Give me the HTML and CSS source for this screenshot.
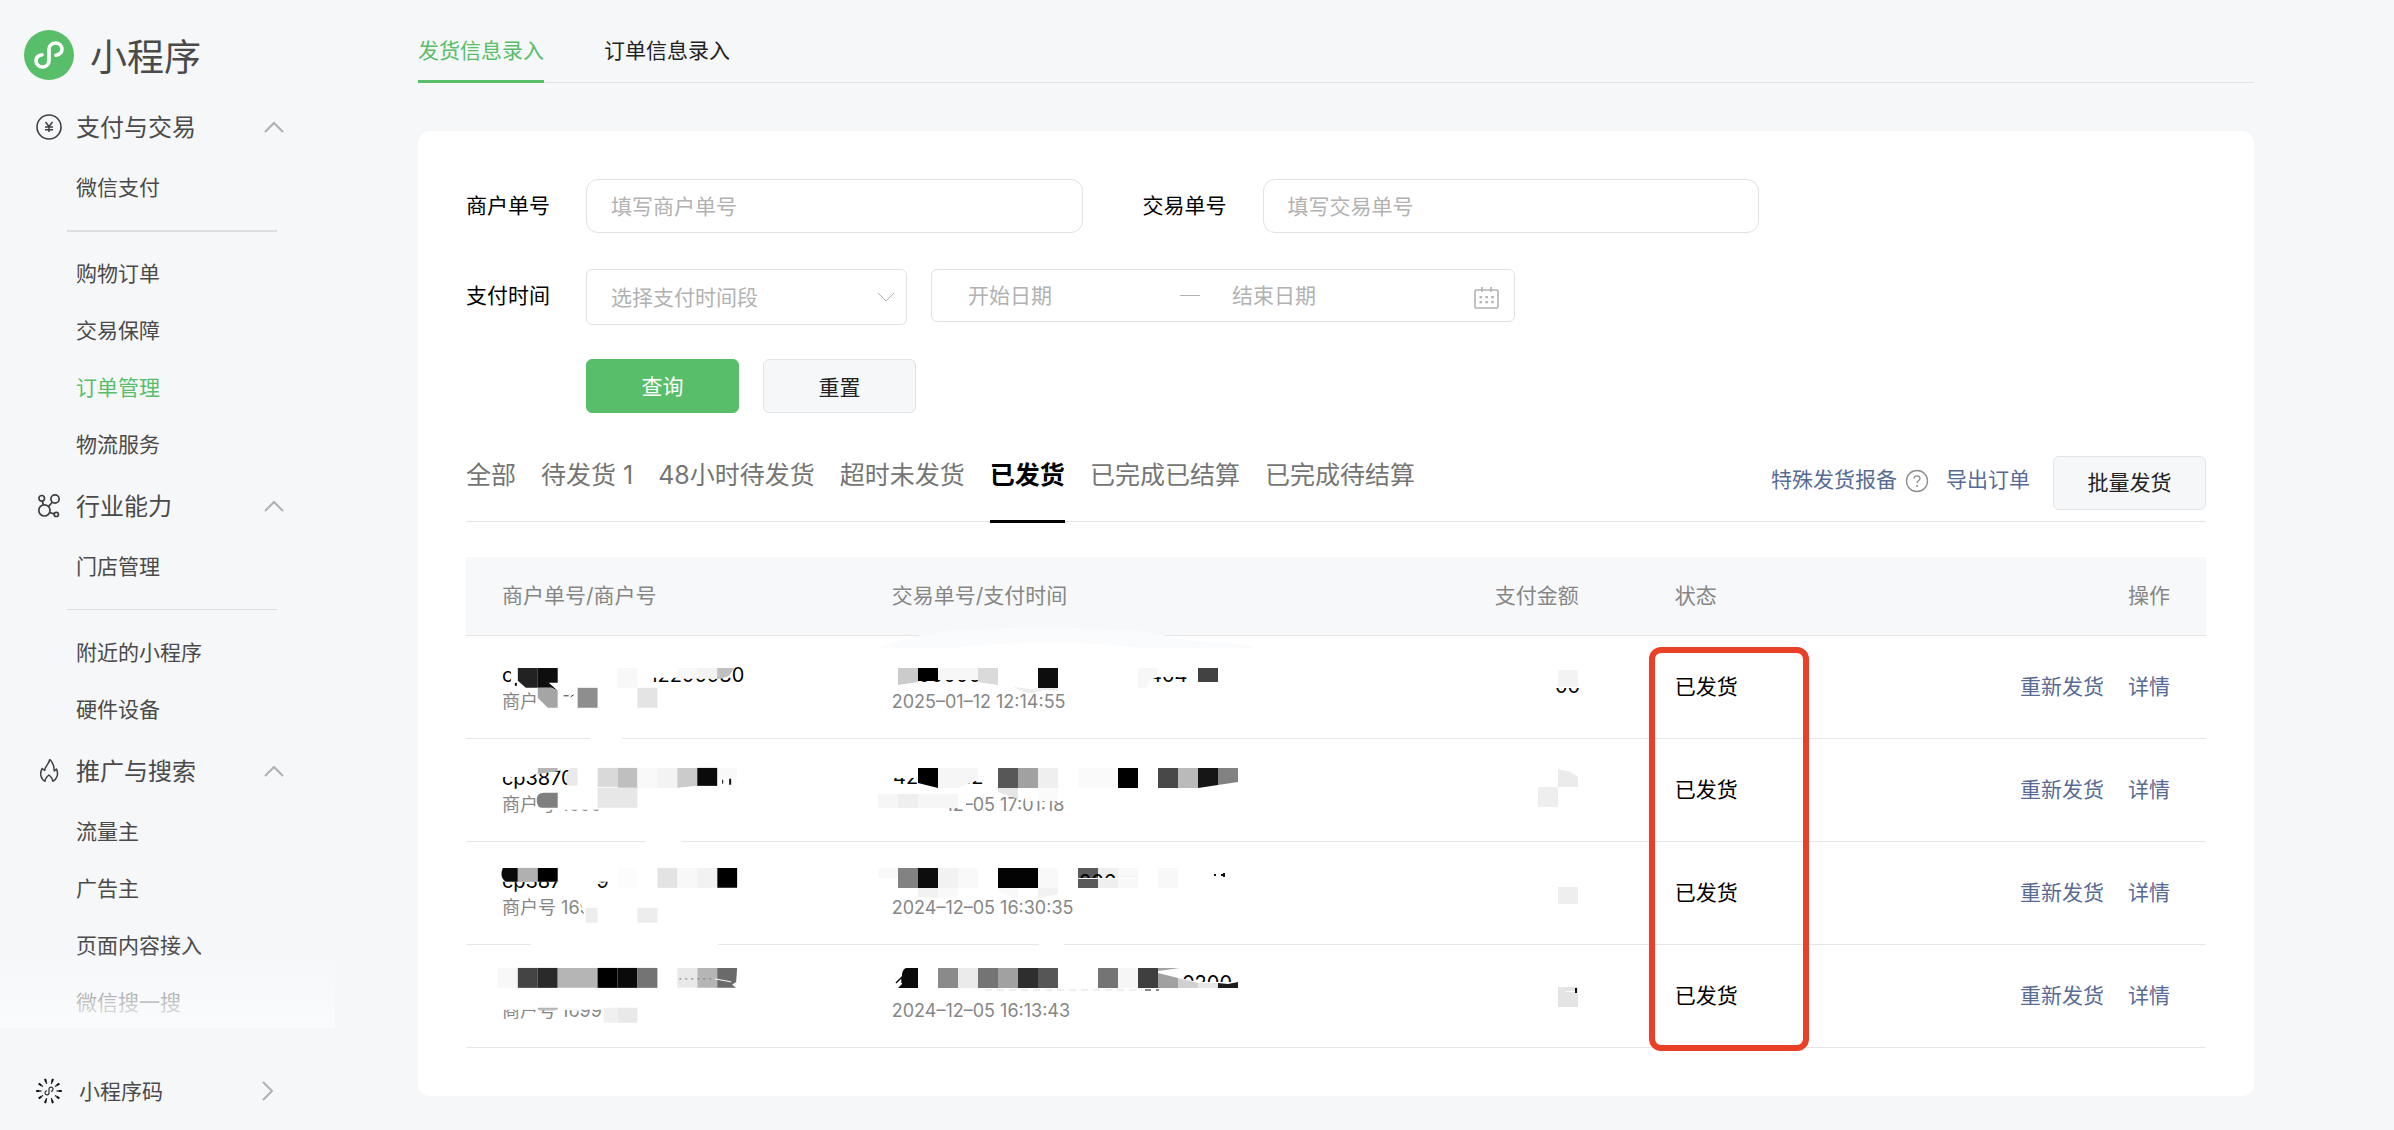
FILE: index.html
```html
<!DOCTYPE html>
<html lang="zh-CN">
<head>
<meta charset="utf-8">
<meta name="viewport" content="width=device-width, initial-scale=1">
<title>小程序</title>
<link rel="stylesheet" href="styles.css">
</head>
<body>
<div class="layout">
  <aside class="sidebar">
    <header class="brand">
      <svg class="brand-logo" viewBox="0 0 50 50" aria-hidden="true"><circle cx="25" cy="25" r="25" fill="#58be6a"/><path d="M32 25.2C35.6 24.6 38 22.4 38 19C38 15.6 35 13 31.500 13C28 13 25 15.600 25 19V31C25 34.400 22 37 18.500 37C15 37 12 34.400 12 31C12 27.600 14.400 25.400 18 24.800" fill="none" stroke="#fff" stroke-width="3.600" stroke-linecap="round"/></svg>
      <span class="brand-name">小程序</span>
    </header>
    <nav class="menu">
      <section>
        <button class="group" type="button">
          <svg class="icon" viewBox="0 0 26 26"><g fill="none" stroke="#3f3f3f" stroke-width="1.600"><circle cx="13" cy="13" r="12"/><path d="M9.500 8L13 12.500L16.500 8M13 12.500V18M9 13H17M9 15.800H17" stroke-width="1.500"/></g></svg>
          <span class="group-name">支付与交易</span>
          <svg class="chevron" viewBox="0 0 20 12"><path d="M1 11L10 2L19 11"/></svg>
        </button>
        <a class="item" href="#">微信支付</a>
        <hr class="rule rule-strong">
        <a class="item" href="#">购物订单</a>
        <a class="item" href="#">交易保障</a>
        <a class="item item-active" href="#">订单管理</a>
        <a class="item" href="#">物流服务</a>
      </section>
      <section>
        <button class="group" type="button">
          <svg class="icon" viewBox="0 0 26 26"><g fill="none" stroke="#3f3f3f" stroke-width="1.700"><circle cx="5.700" cy="5.300" r="2.800"/><circle cx="19" cy="6" r="4.100"/><circle cx="8.400" cy="17.400" r="5.600"/><circle cx="20.300" cy="21.400" r="2.100"/><path d="M6.400 8.200L7.300 11.800M16.400 9.200L12.600 13.400M13.700 19.500L18.200 20.900"/></g></svg>
          <span class="group-name">行业能力</span>
          <svg class="chevron" viewBox="0 0 20 12"><path d="M1 11L10 2L19 11"/></svg>
        </button>
        <a class="item" href="#">门店管理</a>
        <hr class="rule">
        <a class="item" href="#">附近的小程序</a>
        <a class="item" href="#">硬件设备</a>
      </section>
      <section>
        <button class="group" type="button">
          <svg class="icon" viewBox="0 0 26 26"><path d="M13.800 1.500C13 6 9 8 8.600 12.500L6.200 10.500C3.500 15 4.500 21 9 23.300C9 20.600 11 18.600 12.900 17C14.700 18.600 16.800 20.600 16.800 23.300C21 21.300 22.800 16 20.500 11L18.300 13C18.300 8 16.500 4 13.800 1.500Z" fill="none" stroke="#3f3f3f" stroke-width="1.500" stroke-linejoin="round"/></svg>
          <span class="group-name">推广与搜索</span>
          <svg class="chevron" viewBox="0 0 20 12"><path d="M1 11L10 2L19 11"/></svg>
        </button>
        <a class="item" href="#">流量主</a>
        <a class="item" href="#">广告主</a>
        <a class="item" href="#">页面内容接入</a>
        <a class="item" href="#">微信搜一搜</a>
      </section>
    </nav>
    <a class="code-link" href="#">
      <svg class="icon" viewBox="-13 -13 26 26"><defs><path id="ray" d="M7.500 0H9.500" stroke="#111" stroke-width="1.200"/><path id="tip" d="M9.500 0H12.800" stroke="#111" stroke-width="2"/></defs>
        <g id="rays"><use href="#ray"/><use href="#tip"/></g><use href="#rays" transform="rotate(36)"/><use href="#rays" transform="rotate(72)"/><use href="#rays" transform="rotate(108)"/><use href="#rays" transform="rotate(144)"/><use href="#rays" transform="rotate(180)"/><use href="#rays" transform="rotate(216)"/><use href="#rays" transform="rotate(252)"/><use href="#rays" transform="rotate(288)"/><use href="#rays" transform="rotate(324)"/>
        <path d="M2 .4C3.300 .2 4 -.6 4 -1.800C4 -3 3 -3.800 2 -3.800C.8 -3.800 0 -3 0 -1.800V1.800C0 3 -.8 3.800 -2 3.800C-3 3.800 -4 3 -4 1.800C-4 .6 -3.300 -.2 -2 -.4" fill="none" stroke="#333" stroke-width="1.200"/></svg>
      <span class="code-name">小程序码</span>
      <svg class="chevron-right" viewBox="0 0 12 20"><path d="M1 1L10 10L1 19"/></svg>
    </a>
  </aside>

  <main class="main">
    <nav class="page-tabs">
      <a class="page-tab page-tab-active" href="#">发货信息录入</a>
      <a class="page-tab" href="#">订单信息录入</a>
    </nav>

    <section class="card">
      <form class="filters">
        <div class="filter-row filter-row-wide">
          <div class="field">
            <label for="merchant-no">商户单号</label>
            <input class="box box-round" id="merchant-no" type="text" placeholder="填写商户单号">
          </div>
          <div class="field">
            <label for="trade-no">交易单号</label>
            <input class="box box-round" id="trade-no" type="text" placeholder="填写交易单号">
          </div>
        </div>
        <div class="filter-row">
          <label for="period">支付时间</label>
          <div class="select-wrap">
            <select class="box" id="period"><option>选择支付时间段</option></select>
            <svg class="select-arrow" viewBox="0 0 18 11"><path d="M1 1L9 9L17 1"/></svg>
          </div>
          <div class="range">
            <input class="date date-start" type="text" placeholder="开始日期" aria-label="开始日期">
            <span class="dash"></span>
            <input class="date date-end" type="text" placeholder="结束日期" aria-label="结束日期">
            <svg class="calendar" viewBox="0 0 26 22"><g fill="none" stroke="#b2b2b2" stroke-width="1.600"><rect x="1" y="3" width="23" height="18" rx="1"/><path d="M8 0V5M17 0V5"/></g><path d="M5.500 9H8V11.200H5.500ZM11.400 9H13.900V11.200H11.400ZM17.300 9H19.800V11.200H17.300ZM5.500 14H8V16.200H5.500ZM11.400 14H13.900V16.200H11.400ZM17.300 14H19.800V16.200H17.300Z" fill="#b2b2b2"/></svg>
          </div>
        </div>
        <div class="actions">
          <button class="btn btn-primary" type="button">查询</button>
          <button class="btn" type="button">重置</button>
        </div>
      </form>

      <div class="toolbar">
        <nav class="status-tabs">
          <a class="status-tab" href="#">全部</a>
          <a class="status-tab" href="#">待发货 1</a>
          <a class="status-tab" href="#">48小时待发货</a>
          <a class="status-tab" href="#">超时未发货</a>
          <a class="status-tab status-tab-active" href="#">已发货</a>
          <a class="status-tab" href="#">已完成已结算</a>
          <a class="status-tab" href="#">已完成待结算</a>
        </nav>
        <div class="tools">
          <a class="link tool-link" href="#">特殊发货报备</a>
          <svg class="help" viewBox="0 0 24 24"><g fill="none" stroke="#8c8c8c" stroke-width="1.300"><circle cx="12" cy="12" r="10.500"/><path d="M9 9.800C9 7.800 10.300 6.800 12 6.800C13.700 6.800 15 7.900 15 9.500C15 11.500 12 11.700 12 14.300"/></g><circle cx="12" cy="16.900" r="1" fill="#8c8c8c"/></svg>
          <a class="link tool-link" href="#">导出订单</a>
          <button class="btn" type="button">批量发货</button>
        </div>
      </div>

      <div class="table-wrap">
        <table class="orders">
          <colgroup><col class="col-merchant"><col class="col-trade"><col class="col-status"><col></colgroup>
          <thead>
            <tr><th>商户单号/商户号</th><th><div class="split"><span>交易单号/支付时间</span><span>支付金额</span></div></th><th>状态</th><th class="right">操作</th></tr>
          </thead>
          <tbody>
            <tr>
              <td>
                <span class="meta">商户号 1699</span>
                <svg class="mosaic" viewBox="6 6 391 102" preserveAspectRatio="xMinYMin">
                  <text x="42" y="52">cp</text><text x="190" y="52">12200980</text>
                  <path fill="#fff" d="M51 34H104V54H51ZM52 54H66V62H52ZM177 34H272V48H177ZM79 56H240V82H79ZM130 101H163V110H130Z"/>
                  <path fill="#000" d="M55 53H57V56H55Z"/>
                  <path fill="#222" d="M58 38H78V58H66L58 51Z"/><path fill="#0e0e0e" d="M78 38H98V53H89L98 61L92 58H78Z"/>
                  <path fill="#a5a5a5" d="M78 58H92L98 61V78H88L78 68Z"/><path fill="#8e8e8e" d="M118 58H138V78H118Z"/>
                  <path fill="#f8f8f8" d="M158 38H178V58H158ZM218 38H238V49H218Z"/><path fill="#f3f3f3" d="M238 38H258V49H238Z"/><path fill="#c0c0c0" d="M258 38H275L270 46L262 49H258Z"/>
                  <path fill="#e4e4e4" d="M178 58H198V78H178Z"/><path stroke="#333" d="M104 66H109M111 67L114 65"/>
                </svg>
              </td>
              <td>
                <div class="split"><span class="meta">2025–01–12 12:14:55</span>
                <svg class="amount" viewBox="59 17 60 102"><text x="95" y="74">00</text><path fill="#fff" d="M90 50H120V69H90Z"/><path fill="#f3f3f3" d="M98 51H118V68H98Z"/></svg></div>
                <svg class="mosaic" viewBox="-4 16 782 102" preserveAspectRatio="xMinYMin">
                  <path fill="#fafbfc" d="M18 28Q60 12 100 10Q200 4 290 12Q330 23 370 23Q386 24 394 28H278Q240 22 170 23Q120 24 94 28Z"/>
                  <text x="58" y="62">00000</text><text x="289" y="62">404</text>
                  <path fill="#fff" d="M36 44H176V60H36ZM280 44H336V57H280Z"/>
                  <path fill="#cbcbcb" d="M38 48H58V62L38 65Z"/><path fill="#000" d="M58 48H78V61H58Z"/><path fill="#f7f7f7" d="M78 48H118V60H78ZM278 48H298V57L290 60L286 68H278Z"/><path fill="#dadada" d="M118 48H138V65L118 62Z"/>
                  <path fill="#0d0d0d" d="M178 48H198V68H178Z"/><path fill="#ededed" d="M178 68H198V71L184 70L174 73H168L153 67L170 69Z"/><path fill="#424242" d="M338 48H358V62H338Z"/>
                </svg>
              </td>
              <td class="plain">已发货</td>
              <td class="plain right"><a class="link" href="#">重新发货</a><a class="link link-next" href="#">详情</a></td>
            </tr>
            <tr>
              <td>
                <span class="meta">商户号 1699</span>
                <svg class="mosaic" viewBox="6 109 391 102" preserveAspectRatio="xMinYMin">
                  <text x="42" y="155">cp3870</text>
                  <path fill="#fff" d="M38 134H112L104 140L78 144L62 147H38ZM76 160H200V180H76ZM186 206H222V213H186Z"/>
                  <path fill="#b5b5b5" d="M78 138H98V141L78 144Z"/><path fill="#eaeaea" d="M110 138H118V156H108Q104 148 110 138Z"/>
                  <path fill="#d9d9d9" d="M138 138H158V157H138Z"/><path fill="#bfbfbf" d="M158 138H178V158H158Z"/><path fill="#f9f9f9" d="M178 138H198V158H178ZM258 138H278V149H258Z"/><path fill="#f3f3f3" d="M198 138H218V158H198Z"/><path fill="#cbcbcb" d="M218 138H238V156L218 158Z"/><path fill="#0b0b0b" d="M238 138H258V156H238Z"/>
                  <path fill="#e7e7e7" d="M138 158H178V178H138Z"/><path fill="#7f7f7f" d="M84 163H98V178H82Q77 178 77 170Q77 163 84 163Z"/><path fill="#111" d="M270 149H272V155H270ZM263 150H264V154H263Z"/>
                </svg>
              </td>
              <td>
                <div class="split"><span class="meta">2024–12–05 17:01:18</span>
                <svg class="amount" viewBox="59 120 60 102"><path fill="#ebebeb" d="M98 150L110 153L118 158V168H98Z"/><path fill="#eee" d="M78 168H98V188H78Z"/></svg></div>
                <svg class="mosaic" viewBox="-4 119 782 102" preserveAspectRatio="xMinYMin">
                  <text x="33" y="164">42</text><text x="103" y="164">12</text><text x="360" y="164">7</text>
                  <path fill="#fff" d="M30 146H57V158H30ZM98 146H136V161H98ZM20 174H106V188H88V194H20ZM165 172H208V181L165 181Z"/>
                  <path fill="#000" d="M58 148H78V168L58 163ZM258 148H278V168H258Z"/><path fill="#f6f6f6" d="M78 148H118V160L98 168H78ZM18 174H38V188H18ZM58 174H98V188H58Z"/><path fill="#efefef" d="M38 174H58V188H38ZM178 148H198V168H178Z"/>
                  <path fill="#575757" d="M138 148H158V168H138Z"/><path fill="#a1a1a1" d="M158 148H178V168H158Z"/><path fill="#e6e6e6" d="M138 168H158V179L138 172Z"/><path fill="#fafafa" d="M218 148H258V168H218ZM178 168H198V181H178Z"/>
                  <path fill="#484848" d="M298 148H318V168H298Z"/><path fill="#bababa" d="M318 148H338V168H318Z"/><path fill="#161616" d="M338 148H358V165L338 168Z"/><path fill="#828282" d="M358 148H378V162L358 165Z"/>
                </svg>
              </td>
              <td class="plain">已发货</td>
              <td class="plain right"><a class="link" href="#">重新发货</a><a class="link link-next" href="#">详情</a></td>
            </tr>
            <tr>
              <td>
                <span class="meta">商户号 1699</span>
                <svg class="mosaic" viewBox="6 212 391 102" preserveAspectRatio="xMinYMin">
                  <text x="42" y="258">cp387</text><text x="137" y="258">9</text>
                  <path fill="#fff" d="M38 238H160V252H38ZM99 252H104V260H99ZM119 268H200V294H128ZM71 309H259V316H71Z"/>
                  <path fill="#0a0a0a" d="M43 238H58V252H46Q39 247 43 238Z"/><path fill="#b0b0b0" d="M58 238H78V252H58Z"/><path fill="#000" d="M78 238H98V252H78ZM258 238H278V258H258Z"/>
                  <path fill="#fcfcfc" d="M158 238H178V258H158Z"/><path fill="#e3e3e3" d="M198 238H218V258H198Z"/><path fill="#f8f8f8" d="M218 238H238V258H218Z"/><path fill="#f2f2f2" d="M238 238H258V258H238Z"/><path fill="#ededed" d="M126 278H138V293H126ZM178 278H198V293H178Z"/>
                </svg>
              </td>
              <td>
                <div class="split"><span class="meta">2024–12–05 16:30:35</span>
                <svg class="amount" viewBox="59 223 60 102"><path fill="#eee" d="M98 268H118V285H98Z"/></svg></div>
                <svg class="mosaic" viewBox="-4 222 782 102" preserveAspectRatio="xMinYMin">
                  <path fill="#828282" d="M38 248H58V268H38Z"/><path fill="#0d0d0d" d="M58 248H78V268H58Z"/><path fill="#f2f2f2" d="M78 248H98V268H78ZM58 268H78V278L58 277ZM178 268H198V274L178 278Z"/><path fill="#f9f9f9" d="M98 248H118V268H98ZM18 248H38V258H18ZM78 268H98V276L78 278ZM178 248H198V268H178ZM138 268H158V278L138 272Z"/>
                  <path fill="#030303" d="M138 248H178V268H138Z"/><path fill="#5a5a5a" d="M218 248H238V268H218Z"/><path fill="#efefef" d="M238 248H258V268H238Z"/><path fill="#f8f8f8" d="M258 248H278V268H258ZM298 248H318V268H298Z"/>
                  <text x="219" y="269">206w</text><path fill="#fff" d="M218 258H280V259H218Z"/><path fill="#5a5a5a" d="M218 259H238V268H218Z"/><path fill="#efefef" d="M238 259H258V268H238Z"/><path fill="#f8f8f8" d="M258 259H278V268H258Z"/><path fill="#fff" d="M218 268H282V274H218ZM278 250H290V269H278Z"/>
                  <path fill="#111" d="M363 253H365V257H363ZM354 254H356V256H354ZM361 254H363V256H361Z"/>
                </svg>
              </td>
              <td class="plain">已发货</td>
              <td class="plain right"><a class="link" href="#">重新发货</a><a class="link link-next" href="#">详情</a></td>
            </tr>
            <tr>
              <td>
                <span class="meta">商户号 16990</span>
                <svg class="mosaic" viewBox="6 315 391 102" preserveAspectRatio="xMinYMin">
                  <path fill="#fff" d="M38 366H200V380H38ZM143 378H200V394H143Z"/>
                  <path fill="#f8f8f8" d="M38 338H58V358H38ZM98 378H118V382Z"/><path fill="#444" d="M58 338H78V358H58Z"/><path fill="#2a2a2a" d="M78 338H98V358H78Z"/><path fill="#b5b5b5" d="M98 338H138V358H98ZM238 338H258V358H238ZM78 378H98V380H78Z"/>
                  <path fill="#000" d="M138 338H158V358H138Z"/><path fill="#0a0a0a" d="M158 338H178V358H158Z"/><path fill="#747474" d="M178 338H198V358H178Z"/><path fill="#e9e9e9" d="M218 338H238V358H218ZM158 378H178V393H158Z"/><path fill="#6a6a6a" d="M258 338H278L277 352L273 355L277 358H258Z"/><path fill="#f0f0f0" d="M144 378H158V393H144Z"/>
                  <path d="M220 349H254" stroke="#777" stroke-dasharray="2 4" fill="none"/><path d="M256 349L272 352" stroke="#fff" fill="none"/>
                </svg>
              </td>
              <td>
                <div class="split"><span class="meta">2024–12–05 16:13:43</span>
                <svg class="amount" viewBox="59 326 60 102"><path fill="#e4e4e4" d="M98 368H118V388H98Z"/><path fill="#fff" d="M106 372H115V373H106Z"/><path fill="#111" d="M115 369H117V374H115Z"/></svg></div>
                <svg class="mosaic" viewBox="-4 325 782 102" preserveAspectRatio="xMinYMin">
                  <path fill="#fff" d="M179 320H204V326H179Z"/><text x="322" y="370">0200</text>
                  <path fill="#fff" d="M298 353L338 362H378V374H298Z"/>
                  <path fill="#0a0a0a" d="M46 348H58V368H38L42 364V354Q43 349 46 348Z"/><path d="M36 363L42 357V363" stroke="#111" fill="none" stroke-width="1.500"/>
                  <path fill="#8a8a8a" d="M78 348H98V368H78Z"/><path fill="#ebebeb" d="M98 348H118V368H98Z"/><path fill="#747474" d="M118 348H138V368H118ZM238 348H258V368H238Z"/><path fill="#a1a1a1" d="M138 348H158V368H138ZM298 348H320L298 351ZM298 353L318 358V368H298Z"/><path fill="#2e2e2e" d="M158 348H178V368H158Z"/><path fill="#565656" d="M178 348H198V368H178Z"/>
                  <path fill="#f6f6f6" d="M258 348H278V368H258Z"/><path fill="#3f3f3f" d="M278 348H298V368H278Z"/><path fill="#d0d0d0" d="M318 358L338 363V368H318Z"/><path fill="#e8e8e8" d="M338 363H358V368H338Z"/><path fill="#1d1d1d" d="M358 363L368 364L378 362V368H358Z"/>
                  <path d="M125 370H282" stroke="#ddd" stroke-dasharray="7 5" fill="none"/><path d="M285 370H291M296 370H299" stroke="#111" fill="none"/>
                </svg>
              </td>
              <td class="plain">已发货</td>
              <td class="plain right"><a class="link" href="#">重新发货</a><a class="link link-next" href="#">详情</a></td>
            </tr>
          </tbody>
        </table>
        <div class="marker"></div>
      </div>
    </section>
  </main>
</div>
</body>
</html>
```
FILE: styles.css
```css
* { box-sizing: border-box; }

body {
  margin: 0;
  background: #f6f7f9;
  color: #000;
  font-family: Inter, "Noto Sans CJK SC", sans-serif;
  font-size: 21px;
}

a { color: inherit; text-decoration: none; }

button, input, select { font: inherit; color: inherit; }

.layout { display: flex; min-height: 100vh; }

/* Sidebar */
.sidebar {
  position: sticky;
  top: 0;
  display: flex;
  flex-direction: column;
  flex: none;
  width: 335px;
  height: 100vh;
  color: #4a4a4a;
}

.brand {
  display: flex;
  flex: none;
  align-items: center;
  gap: 16px;
  height: 94px;
  padding: 16px 24px 0;
}

.brand-logo { width: 50px; height: 50px; }
.brand-name { padding-top: 5px; font-size: 37px; line-height: 50px; }

.menu {
  position: relative;
  flex: 1;
  min-height: 0;
  overflow: hidden;
}

/* Fades the last entries of the scrolled menu */
.menu::after {
  content: "";
  position: absolute;
  right: 0;
  bottom: 0;
  left: 0;
  height: 80px;
  background: linear-gradient(rgba(250, 251, 252, 0), #fafbfc);
  pointer-events: none;
}

.group {
  display: flex;
  align-items: center;
  gap: 14px;
  width: 100%;
  height: 65px;
  padding: 0 51px 0 36px;
  border: 0;
  background: none;
  font-size: 24px;
  text-align: left;
}

.group-name { flex: 1; padding-bottom: 3px; }
.icon { flex: none; width: 26px; height: 26px; }

.chevron, .chevron-right, .select-arrow {
  flex: none;
  fill: none;
  stroke: #b0b0b0;
  stroke-width: 2;
}

.chevron { width: 20px; height: 12px; }
.chevron-right { width: 12px; height: 20px; }

.item { display: block; padding-left: 76px; line-height: 57px; }
.item-active { color: #58be6a; }

.rule {
  height: 1px;
  margin: 14px 58px 14px 67px;
  border: 0;
  background: #dcdee0;
}

.rule-strong { height: 2px; margin-bottom: 13px; }

.code-link {
  display: flex;
  flex: none;
  align-items: center;
  gap: 17px;
  height: 102px;
  padding: 24px 61px 0 36px;
}

.code-name { flex: 1; padding-bottom: 2px; }

/* Main column */
.main { flex: 1; min-width: 0; padding: 0 140px 34px 83px; }

.page-tabs {
  display: flex;
  gap: 60px;
  height: 83px;
  border-bottom: 1px solid #e2e3e5;
}

.page-tab {
  height: 83px;
  padding-top: 19px;
  color: #222;
  line-height: 64px;
}

.page-tab-active { border-bottom: 3px solid #58be6a; color: #58be6a; }

.card {
  margin-top: 48px;
  padding: 48px;
  border-radius: 12px;
  background: #fff;
}

/* Filters */
.filters { display: flex; flex-direction: column; gap: 36px; }
.filter-row { display: flex; }
.filter-row-wide { gap: 60px; max-width: 1293px; }
.field { display: flex; flex: 1; min-width: 0; }
.filters label { flex: none; width: 120px; line-height: 54px; }

.box {
  width: 100%;
  min-width: 0;
  height: 54px;
  padding: 0 24px;
  border: 1px solid #e2e2e2;
  border-radius: 6px;
  background: #fff;
}

.box-round { border-radius: 12px; }

input::placeholder { color: #b2b2b2; opacity: 1; }

.select-wrap { position: relative; width: 321px; margin-right: 24px; }

select.box { height: 56px; appearance: none; color: #b2b2b2; }

.select-arrow {
  position: absolute;
  top: 23px;
  right: 12px;
  width: 18px;
  height: 11px;
  stroke-width: 1;
}

.range {
  display: flex;
  align-items: center;
  width: 584px;
  height: 53px;
  padding: 0 14px 0 36px;
  border: 1px solid #e2e2e2;
  border-radius: 6px;
}

.date {
  width: 212px;
  height: 50px;
  padding: 0;
  border: 0;
  background: none;
}

.date-end { flex: 1; min-width: 0; }
.dash { width: 20px; height: 1px; margin-right: 32px; background: #b2b2b2; }
.calendar { width: 26px; height: 22px; margin-top: 4px; }

.actions { display: flex; gap: 24px; margin-top: -2px; padding-left: 120px; }

.btn {
  width: 153px;
  height: 54px;
  padding: 0;
  border: 1px solid #e2e3e5;
  border-radius: 6px;
  background: #f6f7f9;
  color: #222;
}

.btn-primary {
  padding-bottom: 2px;
  border-color: #58be6a;
  background: #58be6a;
  color: #fff;
}

/* Status tabs and tools */
.toolbar {
  display: flex;
  justify-content: space-between;
  height: 66px;
  margin-top: 43px;
  border-bottom: 1px solid #e4e4e4;
}

.status-tabs { display: flex; gap: 25px; font-size: 25px; line-height: 38px; }
.status-tab { height: 67px; color: #757575; white-space: nowrap; }
.status-tab-active { border-bottom: 3px solid #000; color: #000; font-weight: 600; }

.tools { display: flex; line-height: 48px; }
.link { color: #576b95; }
.help { width: 24px; height: 24px; margin: 13px 17px 0 8px; }
.tools .btn { margin-left: 23px; }

/* Orders table */
.table-wrap { position: relative; margin-top: 35px; }

.orders {
  width: 100%;
  border-spacing: 0;
  table-layout: fixed;
  text-align: left;
}

.col-merchant { width: 22.4%; }
.col-trade { width: 45%; }
.col-status { width: 12%; }

.orders th {
  height: 79px;
  padding: 0 36px 4px;
  border-bottom: 1px solid #e6e6e6;
  background: #f7f8fa;
  color: #868686;
  font-weight: 400;
}

.orders td {
  position: relative;
  height: 103px;
  padding: 0 36px;
  border-bottom: 1px solid #e6e6e6;
}

.orders .plain { padding-bottom: 4px; }
.orders .right { text-align: right; }
.link-next { margin-left: 24px; }

.split {
  display: flex;
  align-items: center;
  justify-content: space-between;
  padding-right: 24px;
}

.meta {
  display: block;
  padding-top: 30px;
  color: #868686;
  font-size: 18px;
  line-height: 24px;
}

.amount { width: 60px; height: 102px; font-size: 20px; }

.mosaic {
  position: absolute;
  top: 0;
  left: 0;
  width: 100%;
  height: 102px;
  overflow: visible;
  font-size: 20px;
  pointer-events: none;
}

/* Highlight frame round the status column */
.marker {
  position: absolute;
  top: 90px;
  bottom: -3px;
  left: calc(67.4% + 10px);
  width: 160px;
  border: 6px solid #ea4025;
  border-radius: 12px;
  pointer-events: none;
}
```
